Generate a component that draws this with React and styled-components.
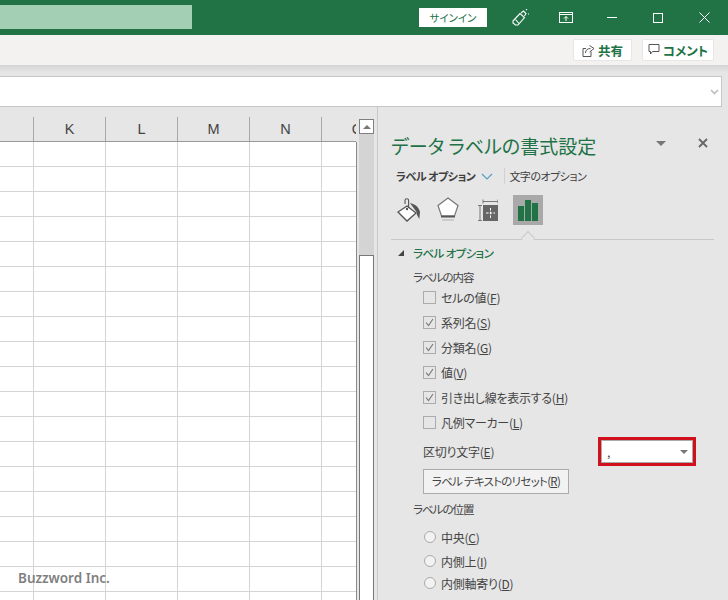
import React from "react";
import styled, { createGlobalStyle } from "styled-components";

const GREEN = "#217346";
const FONT = `"Noto Sans CJK JP", "Noto Sans", sans-serif`;

const GlobalStyle = createGlobalStyle`
  html, body {
    margin: 0;
    padding: 0;
    height: 100%;
    overflow: hidden;
    background: #e6e6e6;
  }
  body {
    font-family: ${FONT};
    font-feature-settings: "palt";
    color: #444444;
  }
`;

const Page = styled.div`
  position: relative;
  width: 728px;
  height: 600px;
  overflow: hidden;
  display: flex;
  flex-direction: column;
`;

const TitleBar = styled.div`
  height: 35px;
  flex: none;
  background: ${GREEN};
  display: flex;
  align-items: center;
  padding-right: 1px;
`;

const TitleHighlight = styled.div`
  width: 192px;
  height: 24px;
  margin-top: -1px;
  margin-right: auto;
  background: #a3cfb4;
`;

const SignIn = styled.div`
  width: 68px;
  height: 19px;
  margin-right: 10px;
  background: #ffffff;
  color: ${GREEN};
  font-size: 10.5px;
  line-height: 19px;
  text-align: center;
`;

const WinButton = styled.div`
  width: 46px;
  height: 35px;
  display: flex;
  align-items: center;
  justify-content: center;
  svg {
    display: block;
  }
`;

const Ribbon = styled.div`
  height: 30px;
  flex: none;
  background: #f3f2f1;
  display: flex;
  align-items: center;
  justify-content: flex-end;
  gap: 10px;
  padding-right: 14px;
  box-sizing: border-box;
`;

const RibbonButton = styled.div`
  width: ${(p) => p.$width}px;
  height: 22px;
  box-sizing: border-box;
  background: #ffffff;
  border: 1px solid #e8e7e6;
  border-radius: 2px;
  display: flex;
  align-items: center;
  justify-content: center;
  gap: 3px;
  color: ${GREEN};
  font-size: 12.5px;
  font-weight: 700;
`;

const RibbonShadow = styled.div`
  height: 11px;
  flex: none;
  background: linear-gradient(#d4d4d4, #e6e6e6 70%);
`;

const FormulaBar = styled.div`
  height: 31px;
  flex: none;
  margin-right: 6px;
  box-sizing: border-box;
  background: #ffffff;
  border: 1px solid #c6c6c6;
  border-left: none;
  display: flex;
  align-items: center;
  justify-content: flex-end;
  padding-right: 2px;
`;

const Body = styled.div`
  flex: 1;
  min-height: 0;
  display: flex;
`;

const SheetArea = styled.div`
  width: 356px;
  flex: none;
  padding-top: 10px;
  overflow: hidden;
`;

const ColumnHeaders = styled.div`
  display: grid;
  grid-template-columns: 34px repeat(6, 72px);
  height: 25px;
  box-sizing: border-box;
  border-bottom: 1px solid #999999;
  margin-right: -150px;
`;

const ColumnHeader = styled.div`
  border-right: 1px solid #a8a8a8;
  color: #444444;
  font-family: "Liberation Sans", sans-serif;
  font-size: 14.5px;
  line-height: 24px;
  text-align: center;
`;

const Grid = styled.div`
  display: grid;
  grid-template-columns: 34px repeat(6, 72px);
  grid-auto-rows: 25px;
  background: #ffffff;
  margin-right: -150px;
`;

const Cell = styled.div`
  border-right: 1px solid #d4d4d4;
  border-bottom: 1px solid #d4d4d4;
`;

const SheetEdge = styled.div`
  width: 1px;
  flex: none;
  margin-top: 35px;
  background: #8a8a8a;
`;

const ScrollBar = styled.div`
  width: 15px;
  flex: none;
  margin: 12px 0 0 2px;
  display: flex;
  flex-direction: column;
  background: #d4d4d4;
`;

const ScrollUp = styled.div`
  height: 15px;
  flex: none;
  box-sizing: border-box;
  background: #ffffff;
  border: 1px solid #808080;
  display: flex;
  align-items: center;
  justify-content: center;
  &::before {
    content: "";
    border-left: 4px solid transparent;
    border-right: 4px solid transparent;
    border-bottom: 4px solid #777777;
  }
`;

const ScrollThumb = styled.div`
  flex: 1;
  margin-top: 121px;
  box-sizing: border-box;
  background: #ffffff;
  border: 1px solid #777777;
  border-bottom: none;
`;

const Panel = styled.aside`
  flex: 1;
  min-width: 0;
  margin-left: 3px;
  box-sizing: border-box;
  border-left: 1px solid #c8c8c8;
  padding: 20px 14px 0 13px;
  font-size: 12px;
  letter-spacing: -0.25px;
  color: #444444;
`;

const PanelHeader = styled.div`
  display: flex;
  align-items: center;
  height: 38px;
`;

const PanelTitle = styled.h1`
  margin: 0;
  width: 250px;
  font-size: 19px;
  font-weight: 400;
  letter-spacing: 0;
  color: ${GREEN};
  white-space: nowrap;
  line-height: 38px;
`;

const PanelMenu = styled.div`
  margin: -6px 0 0 15px;
  border-left: 5px solid transparent;
  border-right: 5px solid transparent;
  border-top: 5px solid #777777;
`;

const PanelClose = styled.div`
  margin: -6px 0 0 32px;
  svg {
    display: block;
  }
`;

const Tabs = styled.div`
  display: flex;
  align-items: center;
  height: 22px;
  padding-left: 5px;
`;

const Tab = styled.div`
  font-weight: ${(p) => (p.$active ? 700 : 400)};
  color: #404040;
  font-size: 11px;
  letter-spacing: -0.5px;
  white-space: nowrap;
`;

const TabChevron = styled.div`
  margin: 0 11px 0 6px;
  svg {
    display: block;
  }
`;

const TabDivider = styled.div`
  width: 1px;
  height: 16px;
  background: #d0d0d0;
  margin-right: 4px;
`;

const IconRow = styled.div`
  display: flex;
  height: 30px;
  margin-top: 8px;
`;

const IconTab = styled.div`
  width: ${(p) => p.$width}px;
  flex: none;
  margin-left: ${(p) => p.$gap || 0}px;
  background: ${(p) => (p.$active ? "#a9a9a9" : "transparent")};
  display: flex;
  align-items: center;
  justify-content: center;
`;

const RuleWrap = styled.div`
  position: relative;
  border-bottom: 1px solid #c8c8c8;
  box-sizing: border-box;
  height: 15px;
`;

const RuleNotch = styled.div`
  position: absolute;
  left: 132px;
  bottom: -4px;
  width: 9px;
  height: 9px;
  background: #e6e6e6;
  border-left: 1px solid #c8c8c8;
  border-top: 1px solid #c8c8c8;
  transform: rotate(45deg);
`;

const SectionTitle = styled.div`
  display: flex;
  align-items: center;
  height: 18px;
  margin-top: 4px;
  padding-left: 7px;
  color: ${GREEN};
  font-size: 11.5px;
  font-weight: 500;
  letter-spacing: -0.6px;
  &::before {
    content: "";
    margin-right: 9px;
    border-left: 6px solid transparent;
    border-bottom: 6px solid #444444;
  }
`;

const GroupLabel = styled.div`
  height: 16px;
  line-height: 16px;
  margin-top: 7px;
  padding-left: 22px;
  font-size: 11.5px;
  letter-spacing: -1px;
`;

const CheckRow = styled.div`
  display: flex;
  align-items: center;
  height: 25px;
  padding-left: 32px;
  white-space: nowrap;
`;

const CheckBox = styled.div`
  width: 13px;
  height: 13px;
  flex: none;
  box-sizing: border-box;
  margin-right: 5px;
  border: 1px solid #ababab;
  display: flex;
  align-items: center;
  justify-content: center;
  svg {
    display: block;
  }
`;

const Radio = styled.div`
  width: 12px;
  height: 12px;
  flex: none;
  box-sizing: border-box;
  margin: 0 5px 0 1px;
  border-radius: 50%;
  background: #f2f2f2;
  border: 1px solid #ababab;
`;

const RadioRow = styled.div`
  display: flex;
  align-items: center;
  height: ${(p) => p.$height}px;
  margin-top: ${(p) => p.$top || 0}px;
  padding-left: 32px;
  white-space: nowrap;
`;

const SeparatorRow = styled.div`
  display: flex;
  align-items: center;
  justify-content: space-between;
  height: 29px;
  margin-top: 2px;
  padding: 0 18px 0 32px;
`;

const Highlight = styled.div`
  width: 98px;
  height: 29px;
  box-sizing: border-box;
  border: 3px solid #d0101c;
`;

const Select = styled.div`
  height: 100%;
  box-sizing: border-box;
  background: #ffffff;
  border: 1px solid #ababab;
  display: flex;
  align-items: center;
  justify-content: space-between;
  padding: 0 4px 0 5px;
  line-height: 1;
  &::after {
    content: "";
    border-left: 4px solid transparent;
    border-right: 4px solid transparent;
    border-top: 4px solid #777777;
  }
`;

const ResetButton = styled.div`
  width: 146px;
  height: 25px;
  margin: 3px 0 0 32px;
  box-sizing: border-box;
  border: 1px solid #ababab;
  background: #f2f2f2;
  font-size: 11.5px;
  letter-spacing: -0.7px;
  line-height: 23px;
  text-align: center;
  white-space: nowrap;
`;

const Watermark = styled.div`
  position: absolute;
  left: 18px;
  top: 569px;
  color: #7f7f7f;
  font-family: "Noto Sans", sans-serif;
  font-size: 13.5px;
  font-weight: 600;
`;

const COLUMNS = ["", "K", "L", "M", "N", "O"];

const Check = () => (
  <svg width="9" height="9" viewBox="0 0 9 9" fill="none">
    <path d="M1 4.500 3.500 7.500 8 1" stroke="#777" strokeWidth="1.100" />
  </svg>
);

const Option = ({ checked, children }) => (
  <CheckRow>
    <CheckBox>{checked && <Check />}</CheckBox>
    {children}
  </CheckRow>
);

const BucketIcon = () => (
  <svg width="26" height="26" viewBox="0 0 26 26">
    <path d="M12 9 21 16 12 24 3 15Z" fill="#fff" stroke="#555" strokeWidth="1.300" />
    <path d="M10 7V3.500a1.800 1.800 0 0 1 3.600 0V11" fill="none" stroke="#555" strokeWidth="1.100" />
    <circle cx="12" cy="12" r="1.200" fill="#555" />
    <path d="M15 6c5 1 9 4 10 9l-.7 7-2.300-4-.5-3Z" fill="#555" />
  </svg>
);

const PentagonIcon = () => (
  <svg width="22" height="26" viewBox="0 0 22 26">
    <path d="M11 1 21 8.500 17.500 19H4.500L1 8.500Z" fill="#fff" stroke="#777" strokeWidth="1.200" />
    <path d="M4 19.500h14" stroke="#555" strokeWidth="2" />
    <path d="M5 23h12" stroke="#ccc" strokeWidth="2" />
  </svg>
);

const SizeIcon = () => (
  <svg width="21" height="22" viewBox="0 0 21 22">
    <path d="M6 .5v4M21 .5v4M6 2.500h15M1 6.500h4M1 21.500h4M3 6.500v15" fill="none" stroke="#777" strokeWidth="1" />
    <rect x="6" y="6" width="15" height="16" fill="#666" />
    <path d="M13.500 9v10M9 14h9" stroke="#fff" strokeWidth="1" strokeDasharray="2.500 1.200" />
  </svg>
);

const ChartIcon = () => (
  <svg width="20" height="21" viewBox="0 0 20 21">
    <rect x="0" y="6" width="6" height="15" fill={GREEN} />
    <rect x="7" y="0" width="6" height="21" fill={GREEN} />
    <rect x="14" y="3" width="6" height="18" fill={GREEN} />
  </svg>
);

const App = () => {
  const rows = Array.from({ length: 19 });
  return (
    <Page>
      <GlobalStyle />
      <TitleBar>
        <TitleHighlight />
        <SignIn>サインイン</SignIn>
        <WinButton>
          <svg width="18" height="18" viewBox="0 0 18 18" fill="none" stroke="#fff" strokeWidth="1.100">
            <path d="M2 12 9 4.500 13.500 8.500 7 16H4.500L2 14Z" />
            <path d="M4.500 10.500 8 14.500M10 4 12.500 2 15 4.500 13.500 7M15 1l1-1M17 5h1" />
          </svg>
        </WinButton>
        <WinButton>
          <svg width="14" height="11" viewBox="0 0 14 11" fill="none" stroke="#fff" strokeWidth="1">
            <rect x=".5" y=".5" width="13" height="10" />
            <path d="M.5 2.500h13M7 9V4.500M5 6.500l2-2 2 2" />
          </svg>
        </WinButton>
        <WinButton>
          <svg width="10" height="1" viewBox="0 0 10 1">
            <path d="M0 .5h10" stroke="#fff" />
          </svg>
        </WinButton>
        <WinButton>
          <svg width="10" height="10" viewBox="0 0 10 10" fill="none">
            <rect x=".5" y=".5" width="9" height="9" stroke="#fff" />
          </svg>
        </WinButton>
        <WinButton>
          <svg width="11" height="11" viewBox="0 0 11 11" fill="none">
            <path d="M.5.500l10 10M10.500.500l-10 10" stroke="#fff" />
          </svg>
        </WinButton>
      </TitleBar>

      <Ribbon>
        <RibbonButton $width={59}>
          <svg width="13" height="13" viewBox="0 0 13 13" fill="none" stroke="#555" strokeWidth="1">
            <path d="M9 7.500v5H1V4.500h3" />
            <path d="M3.500 9c0-3 2-4.500 5-4.500M7.500 1.500l4.500 3-4.500 3.500" />
          </svg>
          共有
        </RibbonButton>
        <RibbonButton $width={72}>
          <svg width="12" height="12" viewBox="0 0 12 12" fill="none" stroke="#555" strokeWidth="1">
            <path d="M1 .5h10v7H4.500L2.500 10V7.500H1Z" />
          </svg>
          コメント
        </RibbonButton>
      </Ribbon>
      <RibbonShadow />
      <FormulaBar>
        <svg width="9" height="6" viewBox="0 0 9 6" fill="none">
          <path d="M1 1 4.500 4.500 8 1" stroke="#bdbdbd" strokeWidth="1.600" />
        </svg>
      </FormulaBar>

      <Body>
        <SheetArea>
          <ColumnHeaders>
            {COLUMNS.map((c) => (
              <ColumnHeader key={c}>{c}</ColumnHeader>
            ))}
            <ColumnHeader />
          </ColumnHeaders>
          <Grid>
            {rows.map((_, r) =>
              Array.from({ length: 7 }).map((__, c) => <Cell key={`${r}-${c}`} />)
            )}
          </Grid>
        </SheetArea>
        <SheetEdge />
        <ScrollBar>
          <ScrollUp />
          <ScrollThumb />
        </ScrollBar>

        <Panel>
          <PanelHeader>
            <PanelTitle>データ ラベルの書式設定</PanelTitle>
            <PanelMenu />
            <PanelClose>
              <svg width="10" height="10" viewBox="0 0 10 10" fill="none">
                <path d="M1 1l8 8M9 1 1 9" stroke="#666" strokeWidth="1.800" />
              </svg>
            </PanelClose>
          </PanelHeader>

          <Tabs>
            <Tab $active>ラベル オプション</Tab>
            <TabChevron>
              <svg width="12" height="7" viewBox="0 0 12 7" fill="none">
                <path d="M1 1l5 5 5-5" stroke="#5b9bc8" strokeWidth="1.200" />
              </svg>
            </TabChevron>
            <TabDivider />
            <Tab>文字のオプション</Tab>
          </Tabs>

          <IconRow>
            <IconTab $width={34}><BucketIcon /></IconTab>
            <IconTab $width={46}><PentagonIcon /></IconTab>
            <IconTab $width={32}><SizeIcon /></IconTab>
            <IconTab $width={30} $gap={10} $active><ChartIcon /></IconTab>
          </IconRow>
          <RuleWrap>
            <RuleNotch />
          </RuleWrap>

          <SectionTitle>ラベル オプション</SectionTitle>
          <GroupLabel>ラベルの内容</GroupLabel>
          <Option>セルの値(<u>F</u>)</Option>
          <Option checked>系列名(<u>S</u>)</Option>
          <Option checked>分類名(<u>G</u>)</Option>
          <Option checked>値(<u>V</u>)</Option>
          <Option checked>引き出し線を表示する(<u>H</u>)</Option>
          <Option>凡例マーカー(<u>L</u>)</Option>

          <SeparatorRow>
            <span>区切り文字(<u>E</u>)</span>
            <Highlight>
              <Select>,</Select>
            </Highlight>
          </SeparatorRow>
          <ResetButton>ラベル テキストのリセット(<u>R</u>)</ResetButton>
          <GroupLabel>ラベルの位置</GroupLabel>
          <RadioRow $height={24} $top={8}>
            <Radio />中央(<u>C</u>)
          </RadioRow>
          <RadioRow $height={24}>
            <Radio />内側上(<u>I</u>)
          </RadioRow>
          <RadioRow $height={20}>
            <Radio />内側軸寄り(<u>D</u>)
          </RadioRow>
        </Panel>
      </Body>
      <Watermark>Buzzword Inc.</Watermark>
    </Page>
  );
};

export default App;
